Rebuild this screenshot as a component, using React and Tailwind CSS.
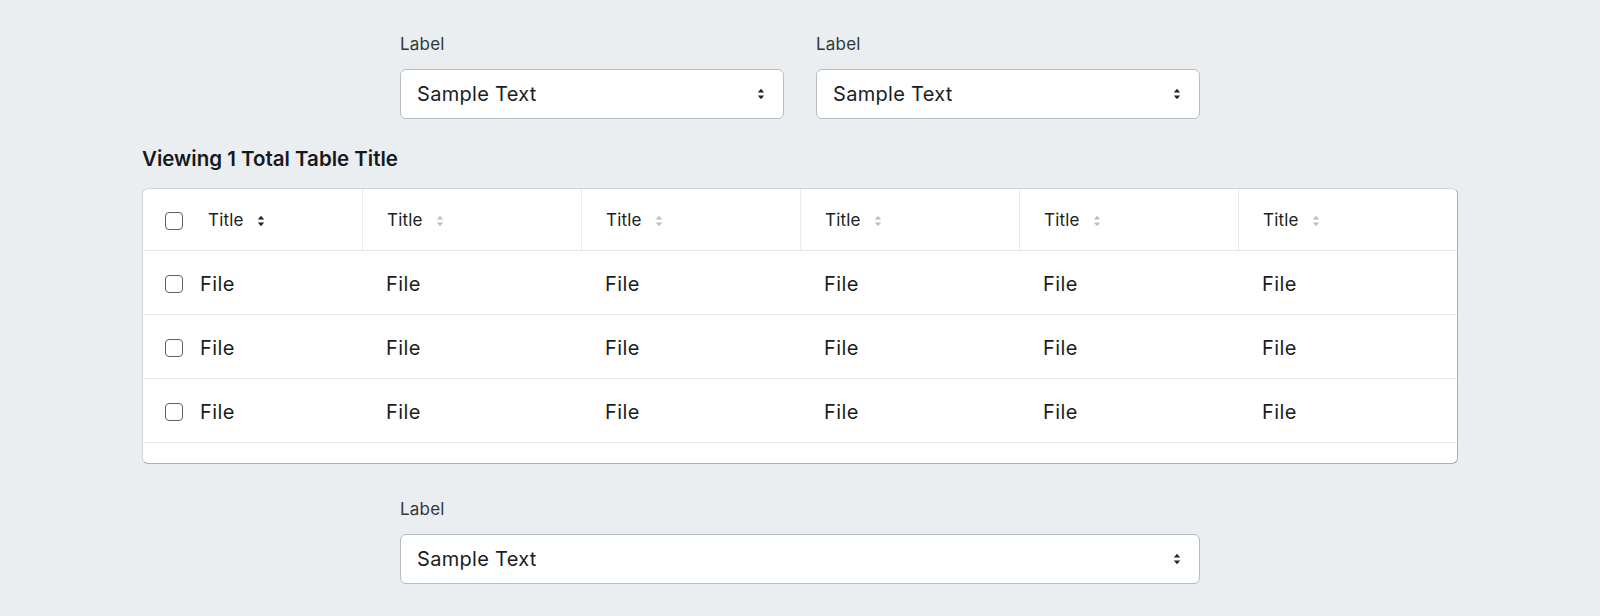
import React from "react";

const font = { fontFamily: "Inter, 'Open Sans', 'Liberation Sans', sans-serif" };

function SortIcon({ active }) {
  const c = active ? "#1f2328" : "#b9bfc7";
  return (
    <svg width="8" height="12" viewBox="0 0 8 12" className="shrink-0">
      <path d="M4 0.8 L7.2 4.6 L0.8 4.6 Z" fill={c} />
      <path d="M4 11.2 L7.2 7.4 L0.8 7.4 Z" fill={c} />
    </svg>
  );
}

function Checkbox() {
  return (
    <span className="block h-[18px] w-[18px] shrink-0 rounded-[4px] border-[1.5px] border-[#5d6168] bg-white" />
  );
}

function Select({ label, className }) {
  return (
    <div className={className}>
      <div className="text-[17px] leading-6 tracking-[0.2px] text-[#33373c]">{label}</div>
      <div className="mt-[13px] flex h-[50px] items-center justify-between rounded-[6px] border border-[#b7bdc5] bg-white pl-4 pr-[18px]">
        <span className="text-[20px] tracking-[0.3px] text-[#1a1d21]">Sample Text</span>
        <SortIcon active />
      </div>
    </div>
  );
}

const cols = [0, 1, 2, 3, 4, 5];
const rows = [0, 1, 2];

export default function App() {
  return (
    <div className="flex h-[616px] w-[1600px] flex-col items-center bg-[#ebeef1] pt-8" style={font}>
      <div className="flex w-[800px] gap-8">
        <Select label="Label" className="w-[384px]" />
        <Select label="Label" className="w-[384px]" />
      </div>

      <div className="mt-[26px] w-[1316px]">
        <h2 className="text-[20.5px] font-semibold leading-7 text-[#16191d]">Viewing 1 Total Table Title</h2>
        <div className="mt-[15px] overflow-hidden rounded-[6px] border border-[#cfd4da] border-b-[#a9b0ba] border-r-[#a9b0ba] bg-white">
          <div className="grid h-[62px] grid-cols-6 border-b border-[#e3e7eb]">
            {cols.map((c) => (
              <div
                key={c}
                className={
                  c === 0
                    ? "flex items-center pl-[22px] pt-[2px]"
                    : "flex items-center border-l border-[#e6e9ed] pl-6 pt-[2px]"
                }
              >
                {c === 0 && <Checkbox />}
                <span
                  className={
                    c === 0
                      ? "ml-[25px] text-[17px] tracking-[0.2px] text-[#1a1d21]"
                      : "text-[17px] tracking-[0.2px] text-[#1a1d21]"
                  }
                >
                  Title
                </span>
                <span className="ml-[13px]">
                  <SortIcon active={c === 0} />
                </span>
              </div>
            ))}
          </div>
          {rows.map((r) => (
            <div key={r} className="grid h-[64px] grid-cols-6 border-b border-[#e6e9ed]">
              {cols.map((c) => (
                <div key={c} className={c === 0 ? "flex items-center pl-[22px] pt-[3px]" : "flex items-center pl-6 pt-[3px]"}>
                  {c === 0 && <Checkbox />}
                  <span
                    className={
                      c === 0
                        ? "ml-[17px] text-[20px] tracking-[0.4px] text-[#1a1d21]"
                        : "text-[20px] tracking-[0.4px] text-[#1a1d21]"
                    }
                  >
                    File
                  </span>
                </div>
              ))}
            </div>
          ))}
          <div className="h-[20px]" />
        </div>
      </div>

      <Select label="Label" className="mt-[33px] w-[800px]" />
    </div>
  );
}
